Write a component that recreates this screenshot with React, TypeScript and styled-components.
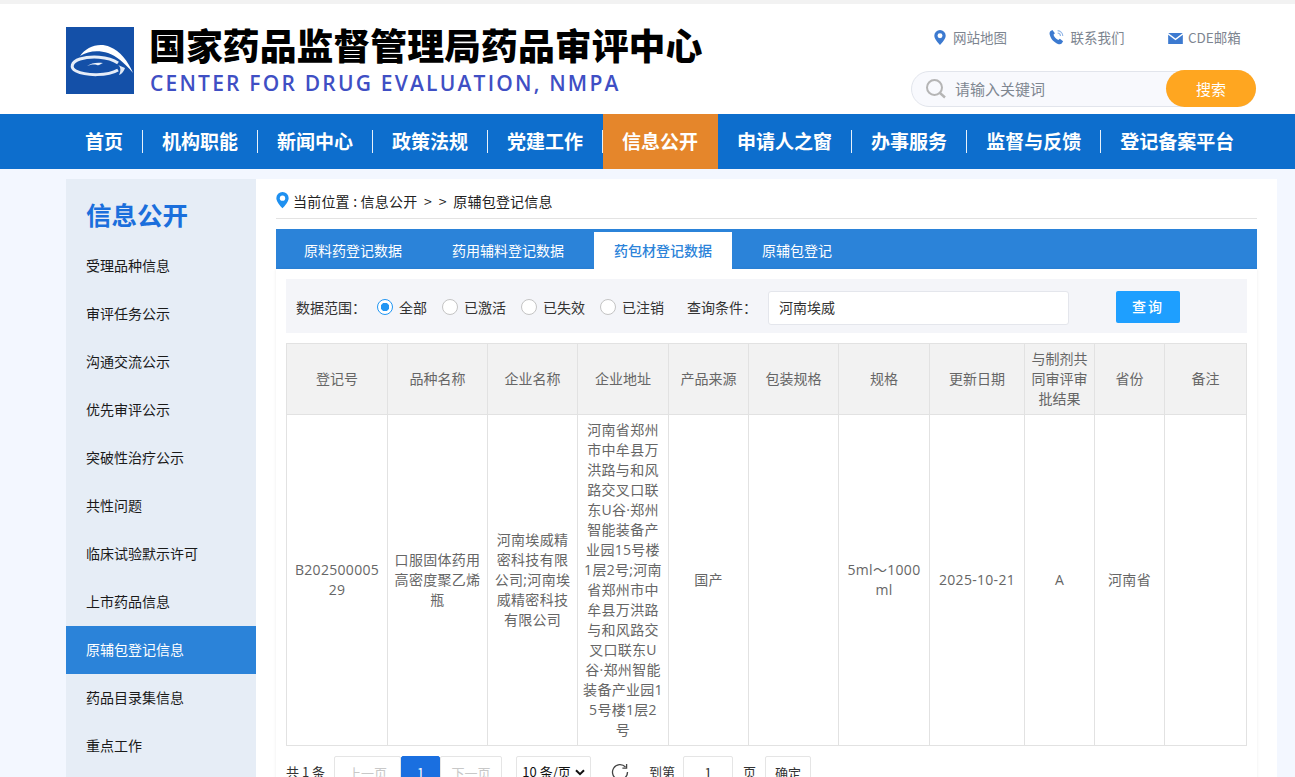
import React from "react";
import styled, { createGlobalStyle } from "styled-components";

const Global = createGlobalStyle`
  html, body { margin: 0; padding: 0; height: 777px; overflow: hidden; background: #f3f7ff; }
  body { font-family: "Noto Sans CJK SC", "Liberation Sans", sans-serif; }
  * { box-sizing: border-box; }
`;

const Page = styled.div`
  width: 1295px;
  height: 777px;
  overflow: hidden;
  border-top: 4px solid #f2f2f2;
`;
const Header = styled.header`
  height: 110px;
  background: #fff;
  padding: 23px 39px 0 66px;
  display: flex;
  justify-content: space-between;
`;
const Brand = styled.div`
  display: flex;
  align-items: flex-start;
  gap: 16px;
`;
const LogoBox = styled.div`
  width: 68px;
  height: 67px;
  background: #1450a8;
  flex: none;
`;
const BrandText = styled.div`
  display: flex;
  flex-direction: column;
  margin-left: -1px;
`;
const CnTitle = styled.div`
  font-size: 36.9px;
  line-height: 40px;
  height: 40px;
  margin-top: -3px;
  font-weight: 900;
  color: #000;
  white-space: nowrap;
`;
const EnTitle = styled.div`
  font-family: "Open Sans", "Noto Sans", sans-serif;
  font-size: 21px;
  line-height: 26px;
  margin-top: 6px;
  margin-left: 1px;
  font-weight: 600;
  letter-spacing: 2.2px;
  color: #3f4fc4;
  white-space: nowrap;
`;
const HeaderRight = styled.div`
  width: 345px;
  display: flex;
  flex-direction: column;
`;
const QuickLinks = styled.div`
  display: flex;
  height: 22px;
  margin-top: -1px;
  padding-left: 23px;
`;
const QuickLink = styled.div<{ $w: number; $gap: number }>`
  width: ${(p) => p.$w}px;
  display: flex;
  align-items: center;
  gap: ${(p) => p.$gap}px;
  font-size: 13.5px;
  color: #7d8590;
  white-space: nowrap;
`;
const SearchBar = styled.div`
  position: relative;
  margin-top: 23px;
  height: 36px;
  width: 345px;
  border: 1px solid #e2e5ec;
  border-radius: 18px;
  background: #f8f9fd;
  display: flex;
  align-items: center;
  padding-left: 13px;
  gap: 8px;
`;
const Placeholder = styled.div`
  font-size: 15px;
  margin-top: -2px;
  color: #7f8791;
`;
const SearchBtn = styled.div`
  position: absolute;
  right: -1px;
  top: -2px;
  width: 90px;
  height: 37px;
  border-radius: 19px;
  background: #ffa620;
  color: #fff;
  font-size: 15px;
  display: flex;
  align-items: center;
  justify-content: center;
`;
const Nav = styled.nav`
  height: 55px;
  background: #0d6ecd;
  padding-left: 66px;
  display: flex;
`;
const NavItem = styled.div<{ $active?: boolean }>`
  position: relative;
  padding: 0 20px 0 19px;
  height: 55px;
  line-height: 53px;
  font-size: 19px;
  font-weight: 700;
  color: #fff;
  white-space: nowrap;
  background: ${(p) => (p.$active ? "#e5862b" : "transparent")};
  &::after {
    content: "";
    position: absolute;
    right: 0;
    top: 16px;
    height: 23px;
    width: 1px;
    background: ${(p) => (p.$active ? "transparent" : "rgba(255, 255, 255, 0.9)")};
  }
  &:last-child::after { display: none; }
`;
const Body = styled.div`
  display: flex;
  padding: 10px 19px 0 66px;
  align-items: flex-start;
`;
const Sidebar = styled.aside`
  width: 190px;
  height: 640px;
  background: #e6edf6;
  flex: none;
`;
const SideTitle = styled.div`
  height: 63px;
  padding: 17px 0 0 20px;
  font-size: 25.5px;
  line-height: 36px;
  font-weight: 700;
  color: #1b6fdc;
`;
const SideItem = styled.div<{ $active?: boolean }>`
  height: 48px;
  line-height: 46px;
  padding-left: 20px;
  font-size: 14px;
  color: ${(p) => (p.$active ? "#fff" : "#1a1a1a")};
  background: ${(p) => (p.$active ? "#2b83d9" : "transparent")};
`;
const Main = styled.main`
  flex: 1;
  height: 640px;
  background: #fff;
  padding: 0 20px;
`;
const Crumb = styled.div`
  height: 40px;
  border-bottom: 1px solid #e3e3e3;
  display: flex;
  align-items: center;
  gap: 4px;
  padding-top: 4px;
  font-size: 14px;
  letter-spacing: 0.2px;
  color: #222;
  white-space: pre;
`;
const TabBar = styled.div`
  margin-top: 10px;
  height: 40px;
  background: #2b83d9;
  display: flex;
  align-items: flex-end;
`;
const Tab = styled.div<{ $active?: boolean; $w: number; $pr?: number }>`
  width: ${(p) => p.$w}px;
  height: 37px;
  line-height: 37px;
  padding-right: ${(p) => p.$pr ?? 0}px;
  text-align: center;
  font-size: 14px;
  color: ${(p) => (p.$active ? "#2b83d9" : "#fff")};
  background: ${(p) => (p.$active ? "#fff" : "transparent")};
  font-weight: ${(p) => (p.$active ? 500 : 400)};
`;
const Panel = styled.div`
  padding: 10px 10px 0;
  box-shadow: 0 0 3px rgba(0, 0, 0, 0.08);
  height: 520px;
`;
const Filter = styled.div`
  height: 54px;
  background: #f4f5f9;
  display: flex;
  align-items: center;
  padding: 4px 0 0 10px;
  font-size: 14px;
  color: #333;
  white-space: nowrap;
`;
const FilterLabel = styled.span<{ $w: number }>`
  width: ${(p) => p.$w}px;
  margin-top: -2px;
`;
const RadioWrap = styled.div<{ $w: number }>`
  width: ${(p) => p.$w}px;
  display: flex;
  align-items: center;
  gap: 6px;
  margin-top: -2px;
`;
const Radio = styled.span<{ $on?: boolean }>`
  width: 16px;
  height: 16px;
  border-radius: 50%;
  border: 1px solid ${(p) => (p.$on ? "#2196f3" : "#c4c4c4")};
  background: ${(p) => (p.$on ? "radial-gradient(circle, #2196f3 0 4px, #fff 4.5px)" : "#fff")};
  flex: none;
`;
const QueryInput = styled.div`
  width: 301px;
  height: 34px;
  margin-left: 18px;
  border: 1px solid #e4e6ec;
  border-radius: 3px;
  background: #fff;
  line-height: 30px;
  padding-left: 10px;
  font-size: 14px;
  color: #333;
`;
const QueryBtn = styled.div`
  width: 64px;
  height: 32px;
  margin: -2px 0 0 47px;
  background: #1e9fff;
  border-radius: 2px;
  color: #fff;
  font-size: 14px;
  font-weight: 500;
  letter-spacing: 2px;
  line-height: 30px;
  text-align: center;
`;
const Table = styled.table`
  margin-top: 10px;
  width: 960px;
  table-layout: fixed;
  border-collapse: collapse;
  font-family: "Open Sans", "Noto Sans CJK SC", sans-serif;
  font-size: 14px;
  line-height: 20px;
  color: #666;
  th, td {
    border: 1px solid #e2e2e2;
    text-align: center;
    padding: 0 5px 1px;
    word-break: break-all;
    font-weight: 400;
  }
  th { height: 71px; background: #f2f2f2; color: #666; }
  td { height: 331px; letter-spacing: 0.3px; }
`;
const Pager = styled.div`
  display: flex;
  align-items: flex-start;
  margin-top: 10px;
  height: 40px;
  font-size: 13px;
  color: #333;
  white-space: nowrap;
`;
const PageLabel = styled.span<{ $ml?: number }>`
  line-height: 32px;
  margin-left: ${(p) => p.$ml ?? 0}px;
`;
const PageBtn = styled.div<{ $w: number; $active?: boolean; $muted?: boolean; $ml?: number }>`
  width: ${(p) => p.$w}px;
  height: 32px;
  margin-left: ${(p) => p.$ml ?? 0}px;
  line-height: 32px;
  text-align: center;
  border: 1px solid ${(p) => (p.$active ? "#1a6fe0" : "#e5e5e5")};
  border-radius: 2px;
  background: ${(p) => (p.$active ? "#1a6fe0" : "#fff")};
  color: ${(p) => (p.$active ? "#fff" : p.$muted ? "#c8c8c8" : "#333")};
`;
const PageSelect = styled(PageBtn)`
  display: flex;
  align-items: center;
  justify-content: center;
  gap: 4px;
  color: #111;
`;
const ColEl = styled.col<{ $w: number }>`
  width: ${(p) => p.$w}px;
`;
const IconSvg = styled.svg`
  flex: none;
`;
const MailSvg = styled.svg`
  flex: none;
  margin-top: 3px;
`;
const RefreshSvg = styled.svg`
  flex: none;
  margin: 7px 0 0 20px;
`;

const Pin = ({ c = "#3c7ad0", s = 14 }: { c?: string; s?: number }) => (
  <IconSvg width={s} height={s * 1.25} viewBox="0 0 16 20">
    <path d="M8 0a7.6 7.6 0 0 0-7.6 7.6C.4 12.6 8 20 8 20s7.6-7.4 7.6-12.4A7.6 7.6 0 0 0 8 0z" fill={c} />
    <circle cx="8" cy="7.6" r="3.3" fill="#fff" />
  </IconSvg>
);
const Phone = () => (
  <IconSvg width="16" height="16" viewBox="0 0 16 16">
    <path d="M1.3 2.2 3.4.9l2.5 3.4-1.4 1.5c.5 2 2.5 4.3 4.8 5.2l1.6-1.3 3.2 2.6-1.4 2.2c-.8.8-2.2 1.1-3.8.4C4.8 13.4 1.6 9.8.7 5.6.4 4.2.6 3 1.3 2.2z" fill="#3c7ad0" />
    <path d="M8.6 1.6a5.6 5.6 0 0 1 5.2 5.4M8.6 4a3.2 3.2 0 0 1 2.9 3" stroke="#8fb4e6" strokeWidth="1.1" fill="none" />
  </IconSvg>
);
const Mail = () => (
  <MailSvg width="15" height="11" viewBox="0 0 16 12">
    <path d="M0 0h16L8 6z" fill="#3c7ad0" />
    <path d="M0 1.8 8 8l8-6.2V12H0z" fill="#3c7ad0" />
  </MailSvg>
);
const Logo = () => (
  <svg width="68" height="67" viewBox="0 0 68 67">
    <path d="M14 29C20 20 33 15 44 20 54 24 62 34 67 46 58 35 50 29 42 26 32 23 22 24 14 29z" fill="#fff" />
    <path d="M52 36C42 29 24 29 14 32 5 35 4 41 10 44c10 5 32 5 42-1" fill="none" stroke="#e6edf8" strokeWidth="3" />
    <path d="M21 39c4-3 10-4 16-3-3 1-4 3-6 2-4-1-7 0-10 1z" fill="#eef3fb" />
    <path d="M52 38c3 2 3 6 1 10 3-1 5-4 6-7z" fill="#dfe8f5" />
  </svg>
);
const SearchIcon = () => (
  <IconSvg width="22" height="22" viewBox="0 0 22 22">
    <circle cx="9.5" cy="9.5" r="7.5" fill="none" stroke="#b5b5b5" strokeWidth="2" />
    <path d="m15 15 5 4.5" stroke="#b5b5b5" strokeWidth="2.4" />
  </IconSvg>
);
const Chevron = () => (
  <svg width="10" height="7" viewBox="0 0 10 7">
    <path d="m1 1.2 4 4 4-4" stroke="#111" strokeWidth="2" fill="none" />
  </svg>
);
const Refresh = () => (
  <RefreshSvg width="18" height="18" viewBox="0 0 18 18">
    <path d="M14.5 4A7.5 7.5 0 1 0 16.5 9" fill="none" stroke="#444" strokeWidth="1.3" />
    <path d="M15.6 1v4.2h-4.2" fill="none" stroke="#444" strokeWidth="1.3" />
  </RefreshSvg>
);

const navs = ["首页", "机构职能", "新闻中心", "政策法规", "党建工作", "信息公开", "申请人之窗", "办事服务", "监督与反馈", "登记备案平台"];
const sides = ["受理品种信息", "审评任务公示", "沟通交流公示", "优先审评公示", "突破性治疗公示", "共性问题", "临床试验默示许可", "上市药品信息", "原辅包登记信息", "药品目录集信息", "重点工作"];
const cols = [101, 100, 90, 91, 80, 90, 91, 95, 70, 70, 82];
const heads = ["登记号", "品种名称", "企业名称", "企业地址", "产品来源", "包装规格", "规格", "更新日期", "与制剂共同审评审批结果", "省份", "备注"];
const row = [
  "B20250000529",
  "口服固体药用高密度聚乙烯瓶",
  "河南埃威精密科技有限公司;河南埃威精密科技有限公司",
  "河南省郑州市中牟县万洪路与和风路交叉口联东U谷·郑州智能装备产业园15号楼1层2号;河南省郑州市中牟县万洪路与和风路交叉口联东U谷·郑州智能装备产业园15号楼1层2号",
  "国产",
  "",
  "5ml～1000ml",
  "2025-10-21",
  "A",
  "河南省",
  "",
];

export default function App() {
  return (
    <Page>
      <Global />
      <Header>
        <Brand>
          <LogoBox><Logo /></LogoBox>
          <BrandText>
            <CnTitle>国家药品监督管理局药品审评中心</CnTitle>
            <EnTitle>CENTER FOR DRUG EVALUATION, NMPA</EnTitle>
          </BrandText>
        </Brand>
        <HeaderRight>
          <QuickLinks>
            <QuickLink $w={117} $gap={7}><Pin s={12} />网站地图</QuickLink>
            <QuickLink $w={122} $gap={6}><Phone />联系我们</QuickLink>
            <QuickLink $w={90} $gap={5}><Mail />CDE邮箱</QuickLink>
          </QuickLinks>
          <SearchBar>
            <SearchIcon />
            <Placeholder>请输入关键词</Placeholder>
            <SearchBtn>搜索</SearchBtn>
          </SearchBar>
        </HeaderRight>
      </Header>
      <Nav>
        {navs.map((n) => (
          <NavItem key={n} $active={n === "信息公开"}>{n}</NavItem>
        ))}
      </Nav>
      <Body>
        <Sidebar>
          <SideTitle>信息公开</SideTitle>
          {sides.map((s) => (
            <SideItem key={s} $active={s === "原辅包登记信息"}>{s}</SideItem>
          ))}
        </Sidebar>
        <Main>
          <Crumb>
            <Pin c="#1e90f0" s={13} />
            <span>当前位置 : 信息公开  &gt;  &gt;  原辅包登记信息</span>
          </Crumb>
          <TabBar>
            <Tab $w={154}>原料药登记数据</Tab>
            <Tab $w={164} $pr={8}>药用辅料登记数据</Tab>
            <Tab $w={138} $active>药包材登记数据</Tab>
            <Tab $w={130}>原辅包登记</Tab>
          </TabBar>
          <Panel>
            <Filter>
              <FilterLabel $w={81}>数据范围：</FilterLabel>
              <RadioWrap $w={65}><Radio $on />全部</RadioWrap>
              <RadioWrap $w={79}><Radio />已激活</RadioWrap>
              <RadioWrap $w={79}><Radio />已失效</RadioWrap>
              <RadioWrap $w={87}><Radio />已注销</RadioWrap>
              <FilterLabel $w={63}>查询条件：</FilterLabel>
              <QueryInput>河南埃威</QueryInput>
              <QueryBtn>查询</QueryBtn>
            </Filter>
            <Table>
              <colgroup>
                {cols.map((w, i) => <ColEl key={i} $w={w} />)}
              </colgroup>
              <thead>
                <tr>{heads.map((h) => <th key={h}>{h}</th>)}</tr>
              </thead>
              <tbody>
                <tr>{row.map((c, i) => <td key={i}>{c}</td>)}</tr>
              </tbody>
            </Table>
            <Pager>
              <PageLabel>共 1 条</PageLabel>
              <PageBtn $w={67} $muted $ml={9}>上一页</PageBtn>
              <PageBtn $w={39} $active>1</PageBtn>
              <PageBtn $w={62} $muted>下一页</PageBtn>
              <PageSelect $w={75} $ml={14}>10 条/页<Chevron /></PageSelect>
              <Refresh />
              <PageLabel $ml={20}>到第</PageLabel>
              <PageBtn $w={50} $ml={8}>1</PageBtn>
              <PageLabel $ml={10}>页</PageLabel>
              <PageBtn $w={46} $ml={9}>确定</PageBtn>
            </Pager>
          </Panel>
        </Main>
      </Body>
    </Page>
  );
}
